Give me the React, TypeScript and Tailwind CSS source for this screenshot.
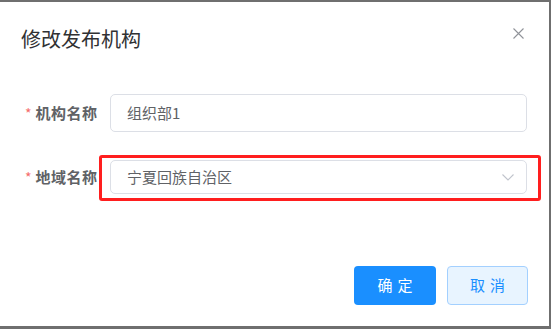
import React from "react";

export default function App() {
  const font = { fontFamily: '"Noto Sans CJK SC", "Noto Sans", sans-serif' };
  return (
    <div className="w-[551px] h-[329px] bg-[#6f6f6f] pt-[2px] overflow-hidden" style={font}>
      <div className="relative w-[549px] h-[324px] bg-white flex flex-col">
        {/* header */}
        <div className="flex items-start justify-between pl-[21px] pr-[25px] pt-[24px]">
          <div className="text-[20px] leading-[26px] text-[#303133]">修改发布机构</div>
          <svg width="11" height="11" viewBox="0 0 11 11" className="mt-[2px]">
            <path d="M0.5 0.5L10.5 10.5M10.5 0.5L0.5 10.5" stroke="#909399" strokeWidth="1.1" fill="none" />
          </svg>
        </div>

        {/* form */}
        <div className="flex flex-col mt-[42px] pr-[22px]">
          <div className="flex items-center h-[38px]">
            <div className="w-[110px] pl-[25px] flex items-center text-[15px] font-bold text-[#606266]">
              <span className="text-[#f56c6c] font-normal text-[14px] mr-[4px]">*</span>
              <span className="tracking-[0.5px]">机构名称</span>
            </div>
            <div className="flex-1 h-[38px] border border-[#dcdfe6] rounded-[5px] flex items-center pl-[16px] text-[15px] text-[#606266]">
              组织部1
            </div>
          </div>

          <div className="relative flex items-center h-[34px] mt-[28px]">
            <div className="w-[110px] pl-[25px] flex items-center text-[15px] font-bold text-[#606266]">
              <span className="text-[#f56c6c] font-normal text-[14px] mr-[4px]">*</span>
              <span className="tracking-[0.5px]">地域名称</span>
            </div>
            <div className="flex-1 h-[34px] border border-[#dcdfe6] rounded-[5px] flex items-center justify-between pl-[16px] pr-[12px] text-[15px] text-[#606266]">
              <span>宁夏回族自治区</span>
              <svg width="12" height="7" viewBox="0 0 12 7">
                <path d="M0.5 0.5L6 6L11.5 0.5" stroke="#c0c4cc" strokeWidth="1.1" fill="none" />
              </svg>
            </div>
            <div className="absolute left-[99px] top-[-5px] w-[442px] h-[46px] border-[3px] border-[#ff1e1e] rounded-[3px] pointer-events-none" />
          </div>
        </div>

        {/* footer */}
        <div className="flex justify-end gap-[11px] pr-[21px] mt-[72px]">
          <button className="w-[82px] h-[39px] rounded-[4px] bg-[#1a8fff] text-white text-[15px] tracking-[5px] pl-[5px]">确定</button>
          <button className="w-[81px] h-[39px] rounded-[4px] bg-[#e8f4ff] border border-[#a3d0ff] text-[#1a8fff] text-[15px] tracking-[5px] pl-[5px]">取消</button>
        </div>
      </div>
    </div>
  );
}
